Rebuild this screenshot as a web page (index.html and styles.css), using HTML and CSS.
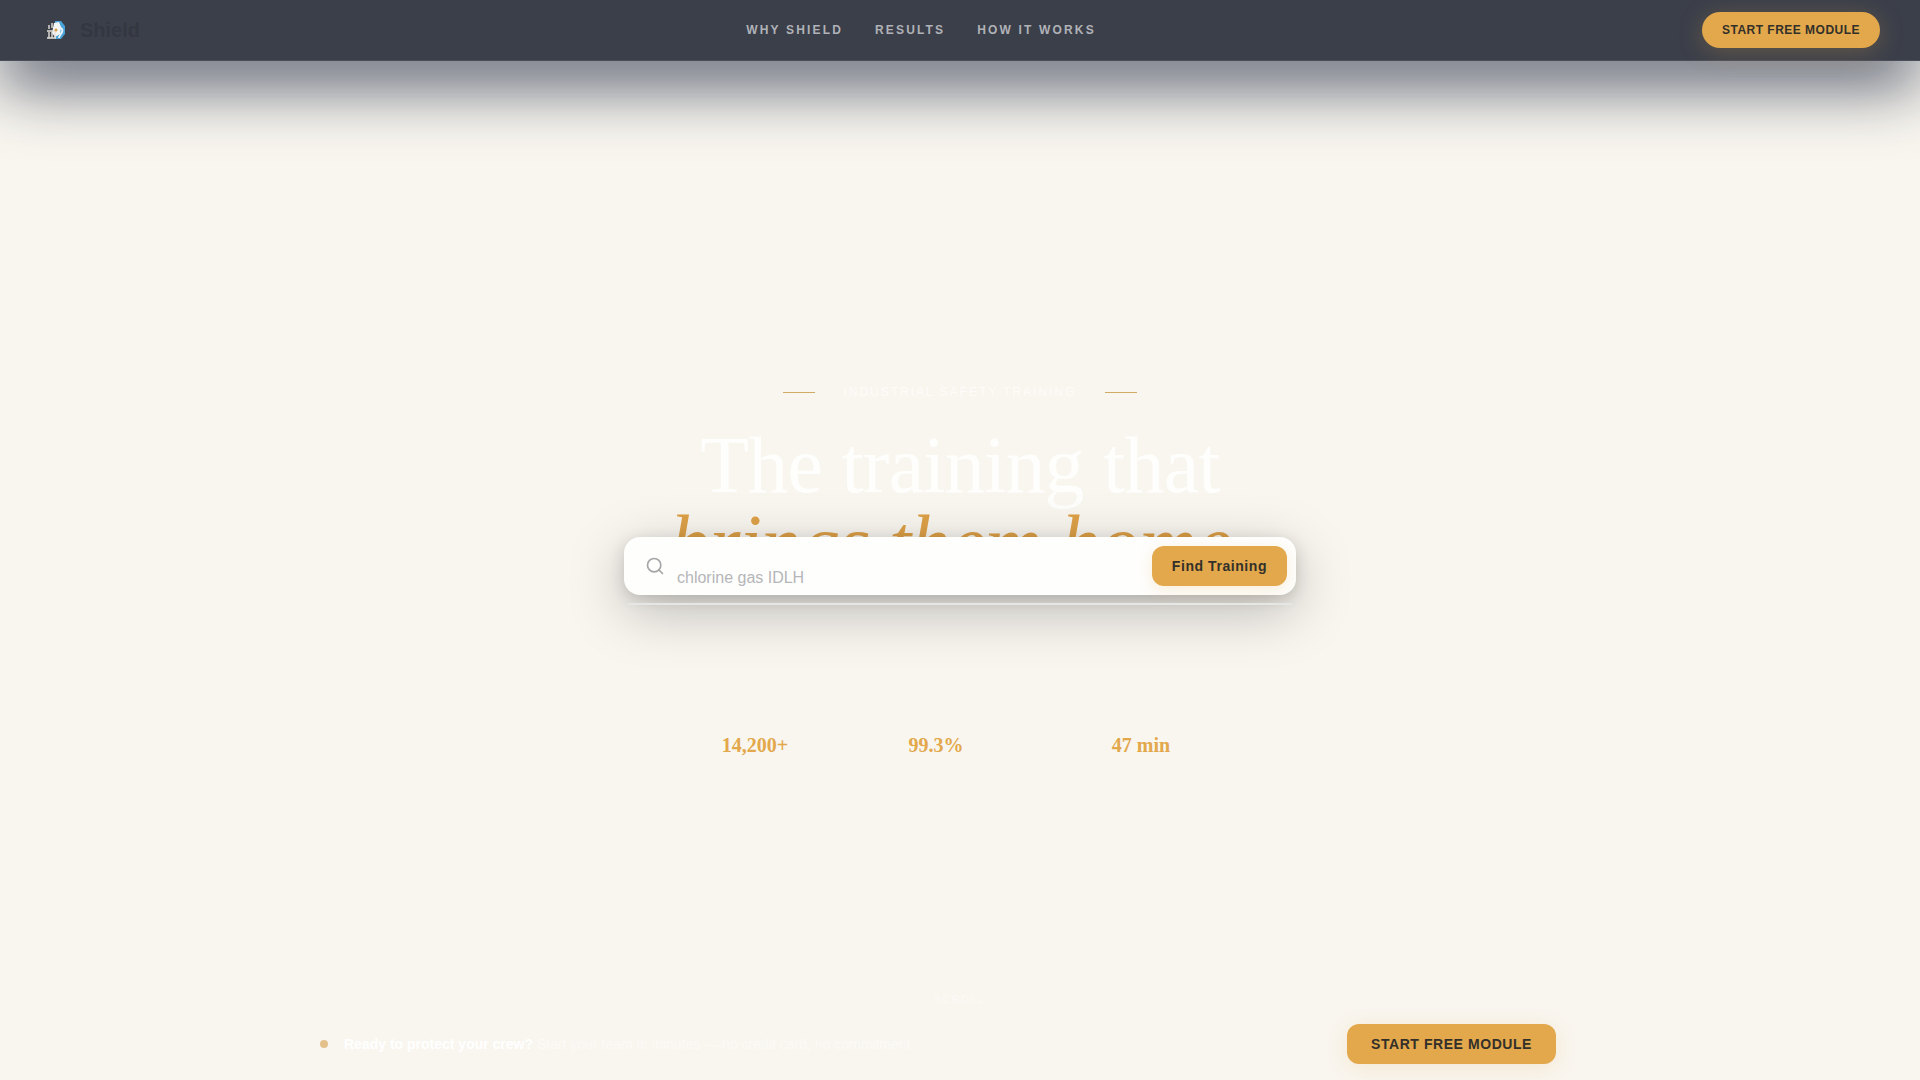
FILE: index.html
```html
<!DOCTYPE html>
<html lang="en">
<head>
  <meta charset="UTF-8">
  <meta name="viewport" content="width=device-width, initial-scale=1.0">
  <title>Shield</title>
  <link rel="stylesheet" href="styles.css">
</head>
<body>

  <header class="topbar">
    <a class="brand" href="#">
      <svg class="brand-icon" viewBox="0 0 20 20" aria-hidden="true">
        <path d="M9 1h6l4 5v8l-4 5H9z" fill="#4aa3d8"/>
        <path d="M8 3l5-1 2 5-1 7-5 3-3-4z" fill="#f4f6f5"/>
        <path d="M14 8c2 0 3 2 2 4s-3 4-3 6" fill="none" stroke="#e8f4fa" stroke-width="2"/>
        <path d="M3 5v4M6 3v5M1 11h8M3 12v6M6 12v6M9 12v6M1 18h9" fill="none" stroke="#e6e2da" stroke-width="1.4"/>
        <circle cx="10" cy="10" r="1.5" fill="#d99a45"/>
      </svg>
      <span>Shield</span>
    </a>
    <nav class="nav">
      <a href="#why">Why Shield</a>
      <a href="#results">Results</a>
      <a href="#how">How It Works</a>
    </nav>
    <button class="btn btn-pill" type="button">START FREE MODULE</button>
  </header>

  <main class="hero">
    <p class="eyebrow"><span>Industrial Safety Training</span></p>
    <h1>The training that<br><em>brings them home.</em></h1>

    <form class="search">
      <svg class="search-icon" viewBox="0 0 24 24" aria-hidden="true">
        <circle cx="11" cy="11" r="8"/>
        <path d="M21 21l-4.3-4.3"/>
      </svg>
      <input type="text" placeholder="chlorine gas IDLH" aria-label="Search training">
      <button class="btn btn-search" type="button">Find Training</button>
    </form>
    <div class="search-line"></div>

    <div class="stats">
      <strong>14,200+</strong>
      <strong>99.3%</strong>
      <strong>47 min</strong>
    </div>

    <p class="scroll">Scroll</p>
  </main>

  <footer class="cta">
    <p><i class="dot"></i><span><b>Ready to protect your crew?</b> Start your team in minutes — no credit card, no commitment</span></p>
    <button class="btn btn-cta" type="button">START FREE MODULE</button>
  </footer>

</body>
</html>
```

FILE: styles.css
```css
* {
  box-sizing: border-box;
}
body {
  margin: 0;
  min-height: 100vh;
  display: flex;
  flex-direction: column;
  background: #f9f6f0;
  font-family: "Liberation Sans", Arial, sans-serif;
  overflow-x: hidden;
}
a {
  text-decoration: none;
}
.topbar {
  display: flex;
  justify-content: space-between;
  align-items: center;
  padding: 12px 40px;
  border-bottom: 1px solid #4a4e59;
  background: #3b3f4a;
  box-shadow: 0 24px 64px rgba(20, 30, 56, 0.72);
}
.brand {
  display: flex;
  align-items: center;
  gap: 14px;
  padding-left: 6px;
  color: #333741;
  font-size: 20px;
  font-weight: bold;
}
.brand-icon {
  width: 20px;
  height: 20px;
}
.nav {
  display: flex;
  gap: 32px;
}
.nav a {
  color: #b0b2b7;
  font-size: 12px;
  font-weight: bold;
  letter-spacing: 0.18em;
  text-transform: uppercase;
}
.btn {
  border: none;
  background: #e2a84b;
  color: #33302a;
  font-family: inherit;
  font-weight: bold;
  letter-spacing: 0.04em;
  cursor: pointer;
}
.btn-pill {
  height: 36px;
  padding: 0 20px;
  border-radius: 18px;
  font-size: 12px;
  box-shadow: 0 4px 24px rgba(226, 168, 75, 0.25);
}
.hero {
  flex: 1;
  display: flex;
  flex-direction: column;
  align-items: center;
  padding-top: 321px;
}
.eyebrow {
  display: flex;
  align-items: center;
  gap: 28px;
  margin: 0 0 24px;
  color: #fdfcf9;
  font-size: 12px;
  line-height: 20px;
  letter-spacing: 2px;
  text-transform: uppercase;
}
.eyebrow::before,
.eyebrow::after {
  content: "";
  width: 32px;
  height: 1px;
  background: #d0ac62;
}
h1 {
  margin: 0;
  color: #fefefc;
  font-family: "Liberation Serif", serif;
  font-size: 80px;
  font-weight: normal;
  line-height: 78px;
  letter-spacing: -0.01em;
  text-align: center;
}
h1 em {
  color: #dda047;
}
/* the search card overlaps the second headline line */
.search {
  position: relative;
  display: flex;
  align-items: center;
  width: 100%;
  max-width: 672px;
  height: 58px;
  margin-top: -45px;
  padding: 0 9px 0 21px;
  border-radius: 16px;
  background: #fefefd;
  box-shadow: 0 16px 56px rgba(0, 0, 0, 0.25), 0 4px 16px rgba(0, 0, 0, 0.14);
}
.search-icon {
  width: 20px;
  height: 20px;
  fill: none;
  stroke: #a5a6a8;
  stroke-width: 2;
  stroke-linecap: round;
}
.search input {
  flex: 1;
  min-width: 0;
  padding: 24px 12px 0;
  border: none;
  outline: none;
  background: none;
  font-family: inherit;
  font-size: 16px;
}
.search input::placeholder {
  color: #b5b6b8;
}
.btn-search {
  height: 40px;
  padding: 0 20px;
  border-radius: 12px;
  font-size: 14px;
  box-shadow: 0 4px 16px rgba(226, 168, 75, 0.2);
}
.search-line {
  position: relative;
  width: 100%;
  max-width: 664px;
  height: 2px;
  margin-top: 8px;
  background: #e6e6e4;
}
.stats {
  display: grid;
  grid-template-columns: 118px 148px 166px;
  gap: 48px;
  margin-top: 126px;
  color: #e2a84b;
  font-family: "Liberation Serif", serif;
  font-size: 20px;
  line-height: 28px;
  text-align: center;
}
.scroll {
  margin: auto 0 0;
  color: #fcfaf7;
  font-size: 10px;
  line-height: 16px;
  letter-spacing: 2px;
  text-transform: uppercase;
}
.cta {
  display: flex;
  justify-content: space-between;
  align-items: center;
  width: 100%;
  max-width: 1280px;
  margin: 0 auto;
  padding: 16px 44px 16px 0;
}
.cta p {
  display: flex;
  align-items: center;
  gap: 16px;
  margin: 0;
  color: #fcfaf7;
  font-size: 14px;
}
.cta b {
  color: #ffffff;
}
.dot {
  width: 8px;
  height: 8px;
  border-radius: 50%;
  background: #e3c08c;
}
.btn-cta {
  height: 40px;
  padding: 0 24px;
  border-radius: 12px;
  font-size: 14px;
  box-shadow: 0 4px 24px rgba(226, 168, 75, 0.2);
}
```
